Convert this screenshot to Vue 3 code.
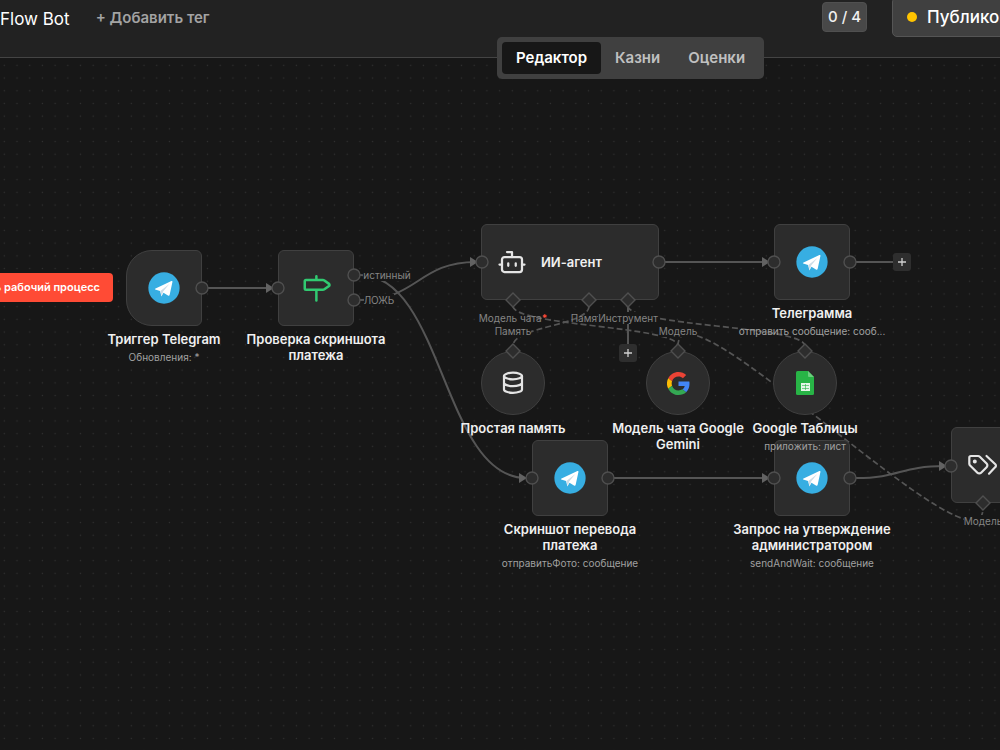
<script setup>
const nodes = [
  { id: 'trigger', x: 164, y: 192, shape: 'start', icon: 'telegram', title: ['Триггер Telegram'], sub: 'Обновления: *' },
  { id: 'check', x: 316, y: 192, shape: 'square', icon: 'signpost', title: ['Проверка скриншота', 'платежа'] },
  { id: 'agent', x: 570, y: 166, shape: 'wide', icon: 'robot', title: ['ИИ-агент'] },
  { id: 'telegram', x: 812, y: 166, shape: 'square', icon: 'telegram', title: ['Телеграмма'], sub: 'отправить сообщение: сооб...' },
  { id: 'photo', x: 570, y: 382, shape: 'square', icon: 'telegram', title: ['Скриншот перевода', 'платежа'], sub: 'отправитьФото: сообщение' },
  { id: 'approve', x: 812, y: 382, shape: 'square', icon: 'telegram', title: ['Запрос на утверждение', 'администратором'], sub: 'sendAndWait: сообщение' },
  { id: 'classifier', x: 1040, y: 369, shape: 'wide', icon: 'tags' },
  { id: 'memory', x: 513, y: 293, shape: 'round', icon: 'database', title: ['Простая память'] },
  { id: 'gemini', x: 678, y: 293, shape: 'round', icon: 'google', title: ['Модель чата Google', 'Gemini'] },
  { id: 'sheets', x: 805, y: 293, shape: 'round', icon: 'sheets', title: ['Google Таблицы'], sub: 'приложить: лист' },
]

const edges = [
  'M208 230H272',
  'M360 217C443 217 443 420 526 420',
  'M360 242C418 242 418 204 476 204',
  'M665 204H768',
  'M614 420H768',
  'M856 420C900 420 900 408 945 408',
]
const plainEdges = ['M856 204H894', 'M628 248V288']
const dashedEdges = [
  'M513 248C513 268 678 268 678 288',
  'M589 248C589 268 513 268 513 288',
  'M628 248C628 268 805 268 805 288',
  'M678 288C678 212 983 528 983 450',
]
const arrows = [[273, 230], [526, 420], [477, 204], [769, 204], [769, 420], [946, 408]]
const ports = [
  [202, 230], [278, 230], [354, 217], [354, 242], [482, 204], [659, 204], [774, 204],
  [850, 204], [532, 420], [608, 420], [774, 420], [850, 420], [951, 408],
]
const diamonds = [[513, 242], [589, 242], [628, 242], [513, 293], [678, 293], [805, 293], [983, 445]]

const edgeLabels = [
  { x: 387, y: 217, text: 'истинный', solid: true },
  { x: 379, y: 242, text: 'ЛОЖЬ', solid: true },
  { x: 513, y: 260, text: 'Модель чата', required: true },
  { x: 589, y: 260, text: 'Память' },
  { x: 628, y: 260, text: 'Инструмент', solid: true },
  { x: 513, y: 273, text: 'Память', solid: true },
  { x: 678, y: 273, text: 'Модель', solid: true },
  { x: 983, y: 463, text: 'Модель', solid: true },
]
const adders = [[902, 204], [628, 295]]
const px = (x, y) => ({ left: x + 'px', top: y + 'px' })
</script>

<template>
  <div class="app">
    <header class="header">
      <span class="title">Flow Bot</span>
      <button class="add-tag" type="button">+ Добавить тег</button>
      <span class="counter">0 / 4</span>
      <button class="publish" type="button"><i class="dot"></i>Публиковать</button>
    </header>
    <nav class="tabs">
      <button class="tab active" type="button">Редактор</button>
      <button class="tab" type="button">Казни</button>
      <button class="tab" type="button">Оценки</button>
    </nav>
    <main class="canvas">
      <svg class="layer" aria-hidden="true">
        <defs>
          <pattern id="grid" x="-2" y="1" width="12.7" height="12.7" patternUnits="userSpaceOnUse">
            <circle cx="6.3" cy="6.3" r="0.7" fill="#313131" />
          </pattern>
        </defs>
        <rect width="100%" height="100%" fill="url(#grid)" />
        <path v-for="d in edges" :key="d" class="edge" :d="d" />
        <path v-for="d in plainEdges" :key="d" class="edge" :d="d" />
        <path v-for="d in dashedEdges" :key="d" class="edge dashed" :d="d" />
        <path v-for="[x, y] in arrows" :key="x + '-' + y" class="arrow" :d="`M${x - 7} ${y - 5}L${x + 1} ${y}L${x - 7} ${y + 5}Z`" />
      </svg>

      <span
        v-for="l in edgeLabels" :key="l.text + l.x" class="edge-label" :style="px(l.x - 50, l.y - 6)"
      ><span :class="{ solid: l.solid }">{{ l.text }}<b v-if="l.required">*</b></span></span>

      <article v-for="n in nodes" :key="n.id" class="node" :class="n.shape" :style="px(n.x - 90, n.y)">
        <div class="box">
          <svg v-if="n.icon === 'telegram'" width="32" height="32" viewBox="0 0 93 93">
            <circle cx="46.5" cy="46.5" r="45.5" fill="#37aee2" />
            <path d="M22 48L68 26Q72 25 71 29L63 66Q62 70 58 68L45 60L39 71L35 55L21 51Q18 50 22 48Z" fill="#fff" />
            <path d="M36 55L62 35L44 57L40 70Z" fill="#cddce7" />
          </svg>
          <svg v-else-if="n.icon === 'signpost'" width="30" height="30" viewBox="0 0 24 24" class="line green">
            <path d="M12.3 13.5V22M12.3 2.500V5.500M4 5.600H17.500a2 2 0 0 1 1.200.4l3.700 2.700a1 1 0 0 1 0 1.600l-3.700 2.700a2 2 0 0 1-1.200.4H4a1 1 0 0 1-1-1V6.600a1 1 0 0 1 1-1z" />
          </svg>
          <svg v-else-if="n.icon === 'robot'" width="30" height="30" viewBox="0 0 24 24" class="line">
            <path d="M12 8V4H8M2 14h2M20 14h2M15 13v2M9 13v2" />
            <rect x="4" y="8" width="16" height="12" rx="2" />
          </svg>
          <svg v-else-if="n.icon === 'tags'" width="32" height="22" viewBox="0 0 32 22" class="line heavy">
            <path d="M4 2h7a2.500 2.500 0 0 1 1.800.7l6.800 6.800a2.600 2.600 0 0 1 0 3.700l-5.500 5.500a2.600 2.600 0 0 1-3.700 0l-7.300-7.200A2.500 2.500 0 0 1 2.300 9.700V3.700Q2.300 2 4 2z" />
            <path d="M19.500 2l8.800 8.200a2 2 0 0 1 0 2.900L22 19.700" />
            <circle cx="7.800" cy="7.500" r="0.900" fill="#e4e4e4" />
          </svg>
          <svg v-else-if="n.icon === 'database'" width="24" height="24" viewBox="0 0 24 24" class="line heavy">
            <ellipse cx="12" cy="5" rx="9" ry="3.300" />
            <path d="M3 5V18.500A9 3.300 0 0 0 21 18.500V5M3 11.800A9 3.300 0 0 0 21 11.800" />
          </svg>
          <svg v-else-if="n.icon === 'google'" width="23" height="23" viewBox="0 0 48 48">
            <path fill="#ea4335" d="M24 9.500c3.540 0 6.710 1.220 9.210 3.600l6.850-6.850C35.900 2.380 30.470 0 24 0 14.620 0 6.510 5.380 2.560 13.220l7.980 6.190C12.430 13.720 17.740 9.500 24 9.500z" />
            <path fill="#4285f4" d="M46.980 24.550c0-1.570-.15-3.090-.38-4.550H24v9.020h12.940c-.58 2.960-2.260 5.480-4.780 7.180l7.730 6c4.510-4.180 7.090-10.360 7.090-17.650z" />
            <path fill="#fbbc05" d="M10.530 28.590a14.500 14.500 0 0 1 0-9.180l-7.980-6.190a24 24 0 0 0 0 21.560z" />
            <path fill="#34a853" d="M24 48c6.480 0 11.930-2.130 15.890-5.810l-7.730-6c-2.150 1.450-4.920 2.300-8.160 2.300-6.260 0-11.570-4.220-13.470-9.910l-7.980 6.190C6.510 42.620 14.620 48 24 48z" />
          </svg>
          <svg v-else width="18" height="24" viewBox="0 0 18 24">
            <path d="M1.500 0H12L18 6V22.500Q18 24 16.500 24H1.500Q0 24 0 22.500V1.500Q0 0 1.500 0Z" fill="#28b446" />
            <path d="M12 0L18 6H13Q12 6 12 5Z" fill="#6ace7c" />
            <rect x="5" y="12" width="9" height="8" fill="#e4f5e7" />
            <path d="M6 14.500H13M6 17.500H13M9.500 13V19" stroke="#28b446" stroke-width="0.600" />
          </svg>
          <h2 v-if="n.shape === 'wide' && n.title">{{ n.title[0] }}</h2>
        </div>
        <template v-if="n.shape !== 'wide'">
          <h2><span v-for="t in n.title" :key="t">{{ t }}</span></h2>
          <p v-if="n.sub">{{ n.sub }}</p>
        </template>
      </article>

      <svg class="layer" aria-hidden="true">
        <circle v-for="[x, y] in ports" :key="x + '-' + y" class="port" :cx="x" :cy="y" r="6" />
        <path v-for="[x, y] in diamonds" :key="x + '-' + y" class="port" :d="`M${x} ${y - 7}L${x + 7} ${y}L${x} ${y + 7}L${x - 7} ${y}Z`" />
      </svg>

      <button v-for="[x, y] in adders" :key="x" class="adder" type="button" aria-label="Добавить узел" :style="px(x - 9, y - 9)">
        <svg width="8" height="8" viewBox="0 0 8 8"><path d="M4 0V8M0 4H8" stroke="#d0d0d0" stroke-width="1.300" /></svg>
      </button>
      <div class="run-wrap"><button class="run" type="button">Выполнить рабочий процесс</button></div>
    </main>
  </div>
</template>

<style>
body { background: #171717; }
</style>

<style scoped>
.app {
  position: relative;
  display: flex;
  flex-direction: column;
  height: 100vh;
  overflow: hidden;
  background: #171717;
  color: #f0f0f0;
  font-family: Inter, "Noto Sans", sans-serif;
}
button { border: 0; font-family: inherit; white-space: nowrap; cursor: pointer; }
.header {
  display: flex;
  flex: none;
  align-items: flex-start;
  height: 57px;
  overflow: hidden;
  background: #222;
  border-bottom: 1px solid #444;
}
.title { padding-top: 8px; font-size: 17px; line-height: 22px; color: #fff; }
.add-tag {
  margin-left: 26px;
  padding: 8px 0 0;
  background: none;
  color: #a3a3a3;
  font-size: 15px;
  font-weight: 600;
  line-height: 20px;
}
.counter {
  box-sizing: border-box;
  margin: 2px 0 0 auto;
  width: 45px;
  border: 1px solid #505050;
  border-radius: 4px;
  background: #484848;
  font-size: 15px;
  font-weight: 500;
  line-height: 28px;
  text-align: center;
}
.publish {
  display: flex;
  flex: none;
  align-items: center;
  box-sizing: border-box;
  width: 160px;
  height: 40px;
  margin: -3px -52px 0 25px;
  padding: 0 14px;
  gap: 10px;
  border: 1px solid #555;
  border-radius: 5px;
  background: #404040;
  color: #fff;
  font-size: 17px;
  font-weight: 500;
}
.dot { flex: none; width: 10px; height: 10px; border-radius: 50%; background: #ffc400; }
.tabs {
  position: absolute;
  z-index: 2;
  top: 37px;
  left: 497px;
  display: flex;
  padding: 5px;
  border-radius: 5px;
  background: #404040;
}
.tab {
  padding: 0 14px;
  border-radius: 4px;
  background: none;
  color: #c0c0c0;
  font-size: 15px;
  font-weight: 600;
  line-height: 32px;
}
.tab.active { background: #171717; color: #fff; }
.canvas { position: relative; flex: 1; overflow: hidden; }
.layer { position: absolute; inset: 0; width: 100%; height: 100%; pointer-events: none; }
.edge { fill: none; stroke: #555; stroke-width: 2; }
.edge.dashed { stroke-width: 1.700; stroke-dasharray: 6 3; }
.arrow { fill: #626262; }
.port { fill: #2d2d2d; stroke: #4f4f4f; stroke-width: 1.400; }
.edge-label {
  position: absolute;
  width: 100px;
  color: #858585;
  font-size: 10px;
  line-height: 12px;
  text-align: center;
  white-space: nowrap;
}
.solid { background: #171717; }
.edge-label b { color: #ff4b3a; }
.node {
  position: absolute;
  display: flex;
  flex-direction: column;
  align-items: center;
  width: 180px;
}
.box {
  display: flex;
  align-items: center;
  justify-content: center;
  box-sizing: border-box;
  width: 76px;
  height: 76px;
  border: 1px solid #404040;
  border-radius: 6px;
  background: #2c2c2c;
}
.start .box { border-radius: 26px 6px 6px 26px; }
.round .box { width: 64px; height: 64px; border-radius: 50%; }
.wide .box { justify-content: flex-start; gap: 14px; width: 178px; padding-left: 15px; }
h2, p { margin: 0; text-align: center; white-space: nowrap; }
h2 { font-size: 13px; font-weight: 600; line-height: 16px; }
h2 span { display: block; }
.node > h2 { margin-top: 5px; }
p { margin-top: 4px; color: #a0a0a0; font-size: 10px; line-height: 13px; }
.line { fill: none; stroke: #e4e4e4; stroke-width: 1.800; stroke-linecap: round; stroke-linejoin: round; }
.heavy { stroke-width: 2.200; }
.green { stroke: #31c971; stroke-width: 2; }
.adder {
  position: absolute;
  display: flex;
  align-items: center;
  justify-content: center;
  width: 18px;
  height: 18px;
  padding: 0;
  border-radius: 3px;
  background: #2e2e2e;
}
.run-wrap { position: absolute; top: 215px; left: 0; display: flex; justify-content: flex-end; width: 113px; }
.run {
  flex: none;
  padding: 0 13px;
  border-radius: 4px;
  background: #ff4b35;
  color: #fff;
  font-size: 11px;
  font-weight: 600;
  line-height: 29px;
}
</style>
